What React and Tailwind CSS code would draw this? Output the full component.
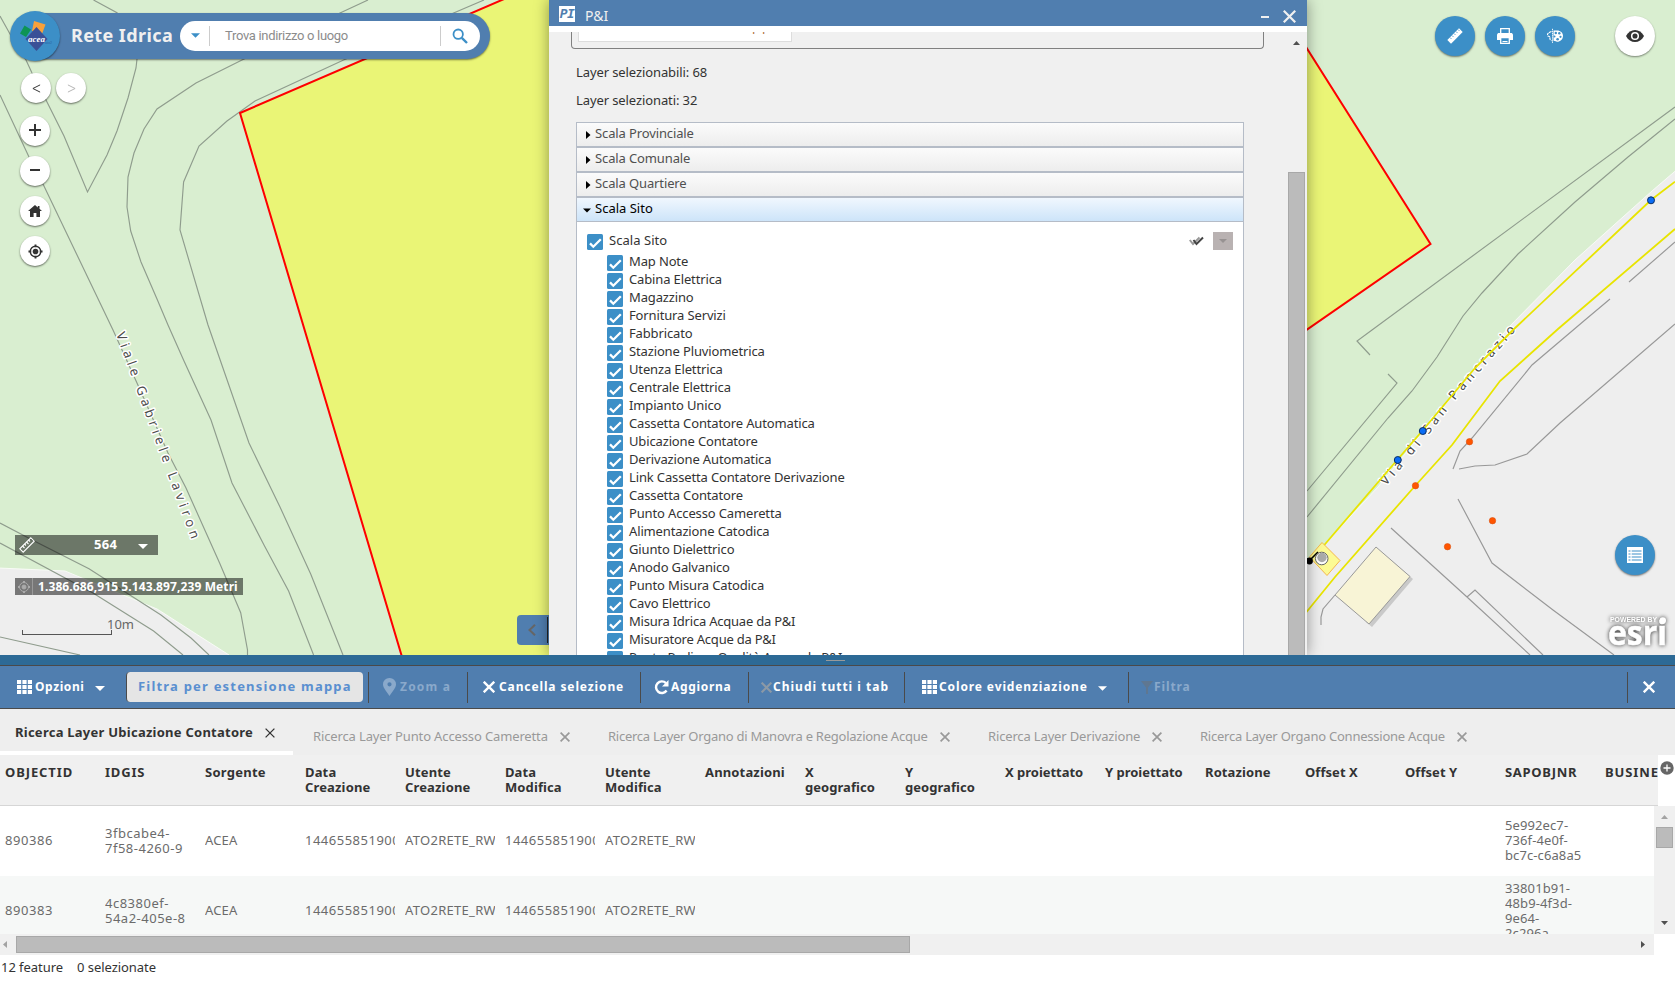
import React from 'react';

const LAYERS = [
  'Map Note', 'Cabina Elettrica', 'Magazzino', 'Fornitura Servizi', 'Fabbricato', 'Stazione Pluviometrica',
  'Utenza Elettrica', 'Centrale Elettrica', 'Impianto Unico', 'Cassetta Contatore Automatica',
  'Ubicazione Contatore', 'Derivazione Automatica', 'Link Cassetta Contatore Derivazione',
  'Cassetta Contatore', 'Punto Accesso Cameretta', 'Alimentazione Catodica', 'Giunto Dielettrico',
  'Anodo Galvanico', 'Punto Misura Catodica', 'Cavo Elettrico', 'Misura Idrica Acquae da P&I',
  'Misuratore Acque da P&I', 'Punto Prelievo Qualità Acque da P&I',
];

const COLUMNS = [
  ['OBJECTID', 'tracking-[0.9px]'], ['IDGIS', 'tracking-[0.8px]'], ['Sorgente', 'tracking-[0.25px]'],
  ['Data Creazione', 'tracking-[0.15px]'], ['Utente Creazione', 'tracking-[0.15px]'],
  ['Data Modifica', 'tracking-[0.1px]'], ['Utente Modifica', 'tracking-[0.1px]'],
  ['Annotazioni', 'tracking-[0.15px]'], ['X geografico', 'tracking-[0.05px]'], ['Y geografico', 'tracking-[0.05px]'],
  ['X proiettato', 'tracking-[-0.02px]'], ['Y proiettato', 'tracking-[-0.02px]'], ['Rotazione', 'tracking-[0.1px]'],
  ['Offset X', 'tracking-[0.05px]'], ['Offset Y', 'tracking-[0.05px]'], ['SAPOBJNR', 'tracking-[0.7px]'],
  ['BUSINESSA', 'tracking-[0.9px]'],
];

const ROWS = [
  { id: '890386', gis: ['3fbcabe4-', '7f58-4260-9'], sap: ['5e992ec7-', '736f-4e0f-', 'bc7c-c6a8a5'] },
  { id: '890383', gis: ['4c8380ef-', '54a2-405e-8'], sap: ['33801b91-', '48b9-4f3d-', '9e64-', '2c296a'] },
];

const TABS = [
  ['Ricerca Layer Punto Accesso Cameretta', 'w-[295px]', 'tracking-[-0.13px]'],
  ['Ricerca Layer Organo di Manovra e Regolazione Acque', 'w-[380px]', 'tracking-[-0.25px]'],
  ['Ricerca Layer Derivazione', 'w-[212px]', 'tracking-[-0.15px]'],
  ['Ricerca Layer Organo Connessione Acque', 'w-[300px]', 'tracking-[-0.23px]'],
];

const Cross = ({ className, width = 1.6 }) => (
  <svg viewBox="0 0 10 10" className={className} fill="none" stroke="currentColor" strokeWidth={width}>
    <path d="M.6.6 9.4 9.4M9.4.6.6 9.4" />
  </svg>
);

const Caret = ({ className }) => (
  <svg viewBox="0 0 10 5" className={className} fill="currentColor"><path d="M0 0h10L5 5z" /></svg>
);

const GridIcon = ({ className }) => (
  <svg viewBox="0 0 15 14" className={className} fill="currentColor">
    <path d="M0 0h4.2v4H0zM5.4 0h4.2v4H5.4zM10.8 0H15v4h-4.2zM0 5h4.2v4H0zM5.4 5h4.2v4H5.4zM10.8 5H15v4h-4.2zM0 10h4.2v4H0zM5.4 10h4.2v4H5.4zM10.8 10H15v4h-4.2z" />
  </svg>
);

const Check = () => (
  <svg viewBox="0 0 16 16" className="h-4 w-4 shrink-0">
    <rect width="16" height="16" rx="1.5" fill="#3c8fc7" />
    <path d="M3 9.4 6.3 12.7 13.8 5.2" fill="none" stroke="#fff" strokeWidth="2.3" />
  </svg>
);

const RoundButton = ({ className = '', children }) => (
  <div className={`flex h-[30px] w-[30px] items-center justify-center rounded-full bg-white text-[#333] shadow-[0_1px_2px_rgba(0,0,0,0.55)] ${className}`}>
    {children}
  </div>
);

function MapCanvas() {
  return (
    <svg viewBox="0 0 1675 655" className="block h-[655px] w-[1675px]">
      <rect width="1675" height="655" fill="#d9eed0" />
      <path d="M-2 568 65 571 157 609 229 655V660H-2z" fill="#eee" stroke="#f8fbf6" />
      <path d="M1680 167 1652 191 1575 260 1508 328 1378 487 1322 547 1300 572V660H1680z" fill="#eee" stroke="#f8fbf6" />
      <g fill="none" stroke="#8f9c8d" strokeWidth="1.15">
        <path d="M0 95 29 157 43 184 113 330 137 383 168 453 186 488 219.600 563 240.700 612.700 247.500 650V655" />
        <path d="M0 16 10 34 26 60 32 73 46 100 64 136 87.500 192 107 155 117 131 128 98 136 68 137 59 133 35 117 12.700 93.500 0" />
        <path d="M368 0 340 13 242 60 196 83 157 109 144 129 134 153 128 177 127 207 130.700 231 141 262 157 299 168 325 184 361 211 420 232 483 264 545 288.600 591 313.600 655" />
        <path d="M484 0 453.600 13 343.600 60 255 101 227 121 199 146 183.600 182 180 230 208 325 249 443 280 507 310.700 574 343 655" />
        <path d="M0 523 35.700 541.700 89 568.700 161 615 191 638 209 655M0 543 93 593 153.600 631 183 655M0 637 80 655" />
        <path d="M1675 107 1372 330 1357 341 1370 355" />
        <path d="M1675 119 1628 157 1575 202 1518 254 1482 293 1463 316 1437 357 1412 391 1388 418 1307 517" />
        <path d="M1388 374 1397 383 1307 491" />
      </g>
      <g fill="none" stroke="#989898" strokeWidth="1.15">
        <path d="M1675 242 1629 282M1610 299 1585 320 1532 365 1472 438 1460 451 1453 469" />
        <path d="M1675 324 1560 423 1527 454 1495 465 1475 466 1459 469M1458 499 1492 563 1553 610 1614 655" />
        <path d="M1391 528 1467 597 1530 655M1467 597 1475 590 1543 655M1335 595 1323 609 1321 617 1321 625" />
      </g>
      <path d="M1379 550 1413 579 1372 627 1366 622z" fill="#c9c9c9" />
      <path d="M1376 547 1410 576.500 1369 624 1335 595z" fill="#f8f4d6" stroke="#999" />
      <defs>
        <path id="laviron" d="M116 334 195 549" />
        <path id="pancrazio" d="M1386 486 1418 448 1461 393 1524 321" />
      </defs>
      <g className="font-['Noto_Sans',sans-serif]" fontSize="13" fill="#4c4c4c" stroke="#fff" strokeWidth="3" strokeLinejoin="round" paintOrder="stroke">
        <text textLength="219"><textPath href="#laviron" textLength="219">Viale Gabriele Laviron</textPath></text>
        <text textLength="203"><textPath href="#pancrazio" textLength="203">Via di San Pancrazio</textPath></text>
      </g>
      <g fill="none" stroke="#e8e400" strokeWidth="1.8">
        <path d="M1675 181.700 1651 200 1513 330 1475 368 1423 430 1398 459 1320 550" />
        <path d="M1675 229 1558 329 1500 381 1452 445 1415 486 1335 577 1300 620" />
      </g>
      <path d="M1322 542.500 1340 560.500 1327 575.500 1309.500 557z" fill="#fcfa94" stroke="#f5b84c" />
      <path d="M1309 561 1318 552" stroke="#000" strokeWidth="1.600" />
      <circle cx="1309.500" cy="561" r="3.400" />
      <circle cx="1321.700" cy="558.500" r="6.300" fill="#fff" stroke="#666" />
      <circle cx="1322" cy="557.500" r="4.700" fill="#aaa" />
      <g fill="#ff5500" stroke="#d94f0e" strokeWidth=".6">
        <circle cx="1469.500" cy="441.700" r="3.200" /><circle cx="1415.500" cy="485.700" r="3.200" />
        <circle cx="1492.500" cy="520.700" r="3.200" /><circle cx="1447.500" cy="546.700" r="3.200" />
      </g>
      <g fill="#0a6cf5" stroke="#0b2f66">
        <circle cx="1651" cy="200.300" r="3.500" /><circle cx="1422.800" cy="431" r="3.500" /><circle cx="1397.800" cy="460" r="3.500" />
      </g>
      <path d="M240 113 525 -10H1270L1430.500 244 820 667H405z" fill="#eaf576" stroke="#fe0000" strokeWidth="2" />
    </svg>
  );
}

function AceaLogo() {
  return (
    <svg viewBox="0 0 50 50" className="h-[50px] w-[50px]">
      <path d="M14.500 14.500 21 18.500 16 26 10 22.500z" fill="#0d9455" />
      <path d="M24 10 35.500 13.500 32 23 22 20z" fill="#f9a13a" />
      <path d="M26.500 16 37.500 28 26.500 40 15.500 28z" fill="#3a5097" />
      <text x="18" y="30.500" fontSize="9" fontStyle="italic" fontWeight="700" fill="#fff" className="font-['Liberation_Serif',serif]">acea</text>
      <text x="35" y="32.500" fontSize="4" fill="#2b63a0" className="font-['Liberation_Serif',serif]">ato2</text>
    </svg>
  );
}

function SearchHeader() {
  return (
    <div className="absolute left-[10px] top-[11px] flex items-center">
      <div className="z-10 h-[50px] w-[50px] shrink-0 rounded-full bg-[#3c8fc7] shadow-[0_1px_2px_rgba(0,0,0,0.5)]"><AceaLogo /></div>
      <div className="-ml-[25px] mb-px flex h-[46px] w-[455px] items-center rounded-r-full bg-[#507eaf] pl-[36px] shadow-[0_1px_2px_rgba(0,0,0,0.5)]">
        <span className="w-[109px] whitespace-nowrap text-[18px] font-bold tracking-[0.4px] text-[#f0f0f0]">Rete Idrica</span>
        <div className="flex h-[30px] w-[300px] items-center rounded-full bg-white text-[#3c8fc7]">
          <Caret className="ml-[11px] h-[5px] w-[9px]" />
          <div className="ml-[9px] h-5 w-px bg-[#ccc]" />
          <span className="ml-[15px] w-[215px] whitespace-nowrap font-['Roboto',sans-serif] text-[13px] tracking-[-0.32px] text-[#8c8c8c]">Trova indirizzo o luogo</span>
          <div className="h-5 w-px bg-[#ccc]" />
          <svg viewBox="0 0 16 16" className="ml-[11px] h-4 w-4" fill="none" stroke="currentColor">
            <circle cx="6.200" cy="6.200" r="4.700" strokeWidth="1.800" /><path d="M9.800 9.800 15 15" strokeWidth="2.400" />
          </svg>
        </div>
      </div>
    </div>
  );
}

function MapControls() {
  return (
    <div className="absolute left-[20px] top-[73px] flex flex-col">
      <div className="flex gap-[5px] pl-px">
        <RoundButton><svg viewBox="0 0 10 10" className="h-[9px] w-[9px]" fill="none" stroke="#333" strokeWidth="1.1"><path d="M9 1 1 5l8 4" /></svg></RoundButton>
        <RoundButton><svg viewBox="0 0 10 10" className="h-[9px] w-[9px]" fill="none" stroke="#b5b5b5" strokeWidth="1.1"><path d="M1 1 9 5 1 9" /></svg></RoundButton>
      </div>
      <RoundButton className="mt-[13px]"><svg viewBox="0 0 12 12" className="mb-0.5 h-3 w-3" stroke="#333" strokeWidth="2"><path d="M6 0v12M0 6h12" /></svg></RoundButton>
      <RoundButton className="mt-[10px]"><svg viewBox="0 0 12 12" className="mb-0.5 h-3 w-3" stroke="#333" strokeWidth="2"><path d="M1 6h10" /></svg></RoundButton>
      <RoundButton className="mt-[10px]"><svg viewBox="0 0 14 12" className="h-3 w-[14px]" fill="#333"><path d="M7 0 0 6h2v6h3.600V8h2.800v4H12V6h2L11.500 3.800V1H9.800v1.400z" /></svg></RoundButton>
      <RoundButton className="mt-[10px]">
        <svg viewBox="0 0 16 16" className="h-[15px] w-[15px]" fill="none" stroke="#333" strokeWidth="1.500"><circle cx="8" cy="8" r="5.600" /><circle cx="8" cy="8" r="3" fill="#333" stroke="none" /><path d="M8 .5v3M8 12.500v3M.5 8h3M12.500 8h3" strokeWidth="2" /></svg>
      </RoundButton>
    </div>
  );
}

function Tools() {
  const blue = 'flex h-10 w-10 items-center justify-center rounded-full bg-[#3c8fc7] text-white shadow-[0_1px_2px_rgba(0,0,0,0.5)]';
  return (
    <>
      <div className="absolute left-[1435px] top-[16px] flex gap-[10px]">
        <div className={blue}>
          <svg viewBox="0 0 16 16" className="h-4 w-4"><path d="M12 .3 15.700 4 4 15.700.3 12z" fill="#fff" /><path d="M3 9.500l1.500 1.500M5 7.500l1.500 1.500M7 5.500l1.500 1.500M9 3.500l1.500 1.500M11 1.500l1.500 1.500" stroke="#3c8fc7" strokeWidth=".8" /></svg>
        </div>
        <div className={blue}>
          <svg viewBox="0 0 16 16" className="h-4 w-4" fill="none" stroke="#fff">
            <path d="M3.700 5V.7h8.600V5" strokeWidth="1.300" /><path d="M1.200 5h13.600L16 6.200V12H0V6.200z" fill="#fff" stroke="none" />
            <path d="M3.700 9.700h8.600v5.600H3.700z" fill="#3c8fc7" strokeWidth="1.300" /><path d="M5.500 13.500h5" strokeWidth="1" />
          </svg>
        </div>
        <div className={blue}>
          <svg viewBox="0 0 16 16" className="h-4 w-4">
            <path d="M6.500 2.500H10c3.500 0 6 2.300 6 5.300 0 3.500-2.500 6-6 6-1 0-1.500-1-3.500-1z" fill="#fff" />
            <path d="M4.500 3.500C1.500 4.500.3 6 .3 7c0 1.400 1.500 1.500 2.500 1.500S1.500 11 4.500 12.700" fill="none" stroke="#fff" strokeWidth="1.200" strokeDasharray="2.500 .8" />
            <path d="M5.500.8v14.400" stroke="#fff" strokeWidth=".9" strokeDasharray="1.500 .6" />
            <g fill="#3c8fc7"><circle cx="8.800" cy="5" r="1.200" /><circle cx="12.300" cy="5.200" r="1.200" /><circle cx="13.500" cy="8.800" r="1.100" /><circle cx="10.600" cy="11.300" r="1.300" /><circle cx="7.500" cy="8.500" r="1" /></g>
          </svg>
        </div>
      </div>
      <div className="absolute left-[1615px] top-[16px] flex h-10 w-10 items-center justify-center rounded-full bg-white shadow-[0_1px_2px_rgba(0,0,0,0.45)]">
        <svg viewBox="0 0 18 12" className="h-3 w-[18px]"><path d="M0 6C2 2 5.500 0 9 0s7 2 9 6c-2 4-5.500 6-9 6S2 10 0 6z" fill="#333" /><circle cx="9" cy="6" r="3.300" fill="#333" stroke="#fff" strokeWidth="1.500" /></svg>
      </div>
      <div className={`absolute left-[1615px] top-[535px] ${blue}`}>
        <svg viewBox="0 0 16 16" className="h-4 w-4"><path d="M0 0h16v16H0z" fill="#fff" /><path d="M1.500 4h2M4.700 4h9.800M1.500 7h2M4.700 7h9.800M1.500 10h2M4.700 10h9.800M1.500 13h2M4.700 13h9.800" stroke="#3c8fc7" strokeWidth="1" /></svg>
      </div>
      <div className="absolute left-[1608px] top-[614px]">
        <svg viewBox="0 0 60 34" className="h-[34px] w-[60px] overflow-visible drop-shadow-[0_0_2px_rgba(0,0,0,0.8)]">
          <g fill="#fff">
            <text x="2" y="8" fontSize="6.5" fontWeight="700" textLength="47" lengthAdjust="spacingAndGlyphs" className="font-['Liberation_Sans',sans-serif]">POWERED BY</text>
            <text x="0" y="31" fontSize="34" fontWeight="700" stroke="#fff" strokeWidth=".5" textLength="59" lengthAdjust="spacingAndGlyphs" className="font-['Open_Sans',sans-serif]">esri</text>
            <circle cx="54.800" cy="6.500" r="3.200" />
          </g>
        </svg>
      </div>
    </>
  );
}

function MapStatus() {
  return (
    <>
      <div className="absolute left-[15px] top-[535px] flex h-5 w-[143px] items-center bg-black/50 text-white">
        <svg viewBox="0 0 16 16" className="ml-1 h-4 w-4" fill="none" stroke="#fff" strokeWidth="1.100"><path d="M11.800.8 15.200 4.200 4.200 15.200.8 11.800z" /><path d="M3.500 9l2 2M5.500 7l1.500 1.500M7.500 5l2 2M9.500 3l1.500 1.500" /></svg>
        <span className="ml-[59px] text-[13px] font-bold tracking-[0.3px]">564</span>
        <Caret className="ml-[21px] mt-0.5 h-[5px] w-[10px]" />
      </div>
      <div className="absolute left-[15px] top-[578px] flex h-[17px] w-[228px] items-center bg-black/50 text-white">
        <div className="flex h-full w-[18px] items-center justify-center border-r border-[#999]">
          <svg viewBox="0 0 12 12" className="h-3 w-3" fill="none" stroke="#aaa"><circle cx="6" cy="6" r="4.500" /><circle cx="6" cy="6" r="2" fill="#aaa" /><path d="M6 0v2M6 10v2M0 6h2M10 6h2" strokeWidth="2" /></svg>
        </div>
        <span className="ml-[5px] whitespace-nowrap text-[12px] font-bold tracking-[0.1px]">1.386.686,915 5.143.897,239 Metri</span>
      </div>
      <div className="absolute left-[22px] top-[617px] flex w-[112px] flex-col">
        <span className="self-end text-[13px] leading-[15px] text-[#666]">10m</span>
        <div className="-mt-[2px] h-[5px] w-[90px] border-x border-b border-[#555]" />
      </div>
      <div className="absolute left-[517px] top-[615px] flex h-[30px] w-8 items-center justify-between rounded-l bg-[#507eaf]">
        <svg viewBox="0 0 8 12" className="ml-[11px] h-3 w-2" fill="none" stroke="#666" strokeWidth="2"><path d="M7 .8 1.500 6 7 11.200" /></svg>
        <div className="mr-px h-[26px] w-px bg-[#222]" />
      </div>
    </>
  );
}

function LayerPanel() {
  return (
    <div className="absolute left-[549px] top-0 flex h-[655px] w-[758px] flex-col bg-[#f0f0f0] text-[13px] text-[#333] shadow-[0_0_14px_rgba(0,0,0,0.4)]">
      <div className="flex h-[26px] shrink-0 items-center bg-[#507eaf] pl-[10px] pr-[11px] pt-[2px] text-[#f0f0f0]">
        <span className="flex h-4 w-4 items-center justify-center overflow-hidden bg-white font-['DejaVu_Sans_Mono',monospace] text-[13px] font-bold italic leading-4 tracking-[-0.5px] text-[#507eaf]">PI</span>
        <span className="ml-[10px] mt-[3px] text-[14px]">P&amp;I</span>
        <span className="ml-auto mt-[6px] h-0.5 w-2 bg-[#f0f0f0]" />
        <Cross className="ml-[14px] mt-1 h-[13px] w-[13px]" width={1.7} />
      </div>
      <div className="h-[6px] shrink-0 bg-white" />
      <div className="flex min-h-0 flex-1">
        <div className="w-[715px] overflow-hidden pl-[22px]">
          <div className="flex h-[17px] w-[693px] items-start overflow-hidden rounded-b border-x border-b border-[#808080] pl-[6px]">
            <div className="h-[10px] w-[214px] overflow-hidden border border-t-0 border-[#ddd] bg-white pl-[173px] text-[13px] leading-[15px] tracking-[2px] text-[#b07040]"><div className="-mt-[13px]">pp</div></div>
          </div>
          <div className="pl-[5px]">
            <p className="mt-[14px] h-[19px] leading-[19px] tracking-[-0.1px]">Layer selezionabili: 68</p>
            <p className="mt-[9px] h-[19px] leading-[19px] tracking-[-0.1px]">Layer selezionati: 32</p>
            <div className="mt-[12px] w-[668px]">
              {['Scala Provinciale', 'Scala Comunale', 'Scala Quartiere'].map((t) => (
                <div key={t} className="flex h-[25px] items-center border border-[#b5bcc7] bg-gradient-to-b from-[#fbfbfb] to-[#ededed] pb-0.5 pl-[9px] text-[#505050]">
                  <svg viewBox="0 0 5 8" className="mt-[3px] h-2 w-[5px]"><path d="M0 0 4.500 4 0 8z" /></svg>
                  <span className="ml-1 tracking-[-0.12px]">{t}</span>
                </div>
              ))}
              <div className="flex h-[25px] items-center border border-[#b5bcc7] bg-gradient-to-b from-[#f0f7fe] to-[#cde4f9] pb-0.5 pl-[6px] text-black">
                <svg viewBox="0 0 8 5" className="mt-[3px] h-[5px] w-2"><path d="M0 .5h8L4 4.500z" /></svg>
                <span className="ml-[4px]">Scala Sito</span>
              </div>
              <div className="h-[500px] border-x border-[#b5bcc7] bg-white px-[10px] pt-[10px]">
                <div className="flex h-[21px] items-start">
                  <div className="mt-0.5"><Check /></div>
                  <span className="-mt-px ml-[6px] leading-[18px] tracking-[0.05px]">Scala Sito</span>
                  <svg viewBox="0 0 15 10" className="ml-auto mr-px mt-[4px] h-[10px] w-[15px]" fill="none" strokeWidth="2"><path d="M.8 4 4 8 10.500 1.500" stroke="#999" /><path d="M4.500 4 7.500 8 14 1.500" stroke="#444" /></svg>
                  <div className="ml-2 flex h-[18px] w-5 items-center justify-center bg-[#b9b2b2] text-[#979292]"><Caret className="h-1 w-2" /></div>
                </div>
                {LAYERS.map((l) => (
                  <div key={l} className="flex h-[18px] items-start pl-5">
                    <div className="mt-[2px]"><Check /></div>
                    <span className={`-mt-px ml-[6px] whitespace-nowrap leading-[18px] ${l.includes('&') ? 'tracking-[-0.22px]' : 'tracking-[-0.14px]'}`}>{l}</span>
                  </div>
                ))}
              </div>
            </div>
          </div>
        </div>
        <div className="ml-auto flex w-[21px] flex-col items-center pt-[9px]">
          <svg viewBox="0 0 7 4" className="h-1 w-[7px]"><path d="M3.500 0 7 4H0z" fill="#505050" /></svg>
          <div className="mt-[127px] w-[17px] flex-1 border border-b-0 border-[#a8a8a8] bg-[#bbb]" />
        </div>
      </div>
    </div>
  );
}

const Divider = () => <div className="h-[31px] w-px shrink-0 bg-[#4a4a4a]" />;

function Toolbar() {
  return (
    <div className="flex h-[44px] items-center border-y border-[#4a4a4a] bg-[#507eaf] text-[12px] font-bold tracking-[0.88px] text-white">
      <div className="flex w-[126px] items-center pl-[17px]">
        <GridIcon className="h-[14px] w-[15px]" /><span className="ml-[3px] w-[60px] tracking-[0.6px]">Opzioni</span><Caret className="mt-0.5 h-[5px] w-[10px]" />
      </div>
      <div className="flex h-[30px] w-[237px] items-center rounded-sm border-l border-[#4a4a4a] bg-[#e5e5e5] pl-[11px] text-[13px] tracking-[1.2px] text-[#5a8fd0]">
        <span className="whitespace-nowrap">Filtra per estensione mappa</span>
      </div>
      <div className="w-[5px]" /><Divider />
      <div className="flex w-[98px] items-center pl-[14px] text-[#8aa9cb]">
        <svg viewBox="0 0 13 18" className="h-[18px] w-[13px]" fill="currentColor"><path fillRule="evenodd" d="M6.500 0A6.400 6.400 0 0 0 0 6.500C0 10 4 14 6.500 18 9 14 13 10 13 6.500A6.400 6.400 0 0 0 6.500 0zm0 4.200a2.100 2.100 0 1 1 0 4.200 2.100 2.100 0 0 1 0-4.200z" /></svg>
        <span className="ml-1 whitespace-nowrap tracking-[1.2px]">Zoom a</span>
      </div>
      <Divider />
      <div className="flex w-[172px] items-center pl-[15px]"><Cross className="h-3 w-3" width={2} /><span className="ml-1 whitespace-nowrap">Cancella selezione</span></div>
      <Divider />
      <div className="flex w-[107px] items-center pl-[13px]">
        <svg viewBox="0 0 15 15" className="h-[15px] w-[15px]" fill="none"><path d="M12 3.200A5.800 5.800 0 1 0 12.600 10.500" stroke="#fff" strokeWidth="2.400" /><path d="M14.500 0v6.500H8z" fill="#fff" /></svg>
        <span className="ml-[2px] tracking-[0.7px]">Aggiorna</span>
      </div>
      <Divider />
      <div className="flex w-[155px] items-center pl-[12px]"><Cross className="h-[11px] w-[11px] text-[#8c99a6]" width={1.9} /><span className="ml-px whitespace-nowrap tracking-[1px]">Chiudi tutti i tab</span></div>
      <Divider />
      <div className="flex w-[223px] items-center pl-[17px]">
        <GridIcon className="h-[14px] w-[15px]" /><span className="ml-[2px] w-[159px] whitespace-nowrap">Colore evidenziazione</span><Caret className="mt-0.5 h-[5px] w-[9px]" />
      </div>
      <Divider />
      <div className="flex items-center pl-[12px]">
        <svg viewBox="0 0 12 13" className="h-[13px] w-3"><path d="M0 0h12L7 6.500V13H5V6.500z" fill="#5f7791" /></svg>
        <span className="ml-px text-[#8aa9cb]">Filtra</span>
      </div>
      <div className="ml-auto flex w-[48px] items-center"><Divider /><Cross className="ml-[15px] h-3 w-3" width={2} /></div>
    </div>
  );
}

function TabStrip() {
  return (
    <div className="flex h-[46px] bg-[#eee] text-[13px]">
      <div className="flex w-[293px] items-center border-b-4 border-white pl-[15px] pt-[6px]">
        <span className="w-[250px] whitespace-nowrap font-bold tracking-[0.25px] text-[#333]">Ricerca Layer Ubicazione Contatore</span>
        <Cross className="h-[10px] w-[10px] text-[#333]" width={1.3} />
      </div>
      <div className="flex pl-5 pt-[10px]">
        {TABS.map(([t, w, tr]) => (
          <div key={t} className={`flex items-center text-[#999] ${w}`}>
            <span className={`whitespace-nowrap ${tr}`}>{t}</span>
            <Cross className="ml-3 h-[10px] w-[10px]" width={1.7} />
          </div>
        ))}
      </div>
    </div>
  );
}

function Cell({ children, className = '' }) {
  return <div className={`mr-[10px] w-[90px] shrink-0 overflow-hidden whitespace-nowrap ${className}`}>{children}</div>;
}

function Grid() {
  return (
    <div className="flex flex-col text-[13px] leading-[15px]">
      <div className="flex h-[51px] bg-white">
        <div className="flex w-[1658px] overflow-hidden border-b border-[#d6d6d6] bg-[#f0f0f0] pl-[5px] pt-[10px] font-bold text-[#333]">
          {COLUMNS.map(([c, tr]) => <div key={c} className={`mr-[5px] w-[95px] shrink-0 pr-4 ${tr} ${c.includes('proiettato') || c.startsWith('Offset') ? 'whitespace-nowrap' : ''}`}>{c}</div>)}
        </div>
        <svg viewBox="0 0 14 14" className="ml-[2px] mt-[6px] h-[14px] w-[14px]"><circle cx="7" cy="7" r="6.700" fill="#666" /><path d="M7 3.500v7M3.500 7h7" stroke="#fff" strokeWidth="1.300" /></svg>
      </div>
      <div className="flex h-[128px] overflow-hidden">
        <div className="w-[1654px] overflow-hidden text-[#6b6b6b]">
          {ROWS.map((r, i) => (
            <div key={r.id} className={`flex h-[70px] items-center pb-px pl-[5px] ${i ? 'bg-[#f6f8f7]' : 'bg-white'}`}>
              <Cell className="tracking-[0.55px]">{r.id}</Cell>
              <Cell className="tracking-[0.5px]">{r.gis.map((g) => <div key={g}>{g}</div>)}</Cell>
              <Cell className="tracking-[0.15px]">ACEA</Cell>
              {[0, 1].map((k) => (
                <React.Fragment key={k}>
                  <Cell className="tracking-[0.5px]">1446558519000</Cell>
                  <Cell className="tracking-[0.3px]">ATO2RETE_RW</Cell>
                </React.Fragment>
              ))}
              <div className="w-[800px] shrink-0" />
              <Cell className="tracking-[0.1px]">{r.sap.map((g) => <div key={g}>{g}</div>)}</Cell>
            </div>
          ))}
        </div>
        <div className="flex w-[21px] flex-col items-center justify-between bg-[#f0f0f0] pb-[9px] pt-[9px]">
          <div className="flex flex-col items-center">
            <svg viewBox="0 0 7 4" className="h-1 w-[7px]"><path d="M3.500 0 7 4H0z" fill="#a3a3a3" /></svg>
            <div className="mt-[8px] h-[21px] w-[17px] border border-[#a8a8a8] bg-[#bbb]" />
          </div>
          <svg viewBox="0 0 7 4" className="h-1 w-[7px]"><path d="M3.500 4 7 0H0z" fill="#505050" /></svg>
        </div>
      </div>
      <div className="flex h-[21px] w-[1654px] items-center bg-[#f0f0f0] pl-[3px] pr-[9px]">
        <svg viewBox="0 0 4 7" className="h-[7px] w-1"><path d="M0 3.500 4 0v7z" fill="#a3a3a3" /></svg>
        <div className="ml-[9px] h-[17px] w-[894px] border border-[#a8a8a8] bg-[#bbb]" />
        <svg viewBox="0 0 4 7" className="ml-auto h-[7px] w-1"><path d="M4 3.500 0 0v7z" fill="#505050" /></svg>
      </div>
    </div>
  );
}

export default function App() {
  return (
    <div className="flex h-[985px] w-[1675px] flex-col overflow-hidden bg-white font-['Noto_Sans',sans-serif]">
      <div className="relative h-[655px] shrink-0 overflow-hidden">
        <MapCanvas />
        <SearchHeader />
        <MapControls />
        <Tools />
        <MapStatus />
        <LayerPanel />
      </div>
      <div className="flex h-[10px] shrink-0 items-center justify-center bg-[#2d6a96]">
        <div className="mr-[4px] h-px w-[19px] bg-[#999]" />
      </div>
      <Toolbar />
      <TabStrip />
      <Grid />
      <div className="flex h-[30px] items-center gap-[14px] pl-px text-[13px] tracking-[-0.05px] text-[#333]">
        <span className="mb-1">12 feature</span><span className="mb-1">0 selezionate</span>
      </div>
    </div>
  );
}
